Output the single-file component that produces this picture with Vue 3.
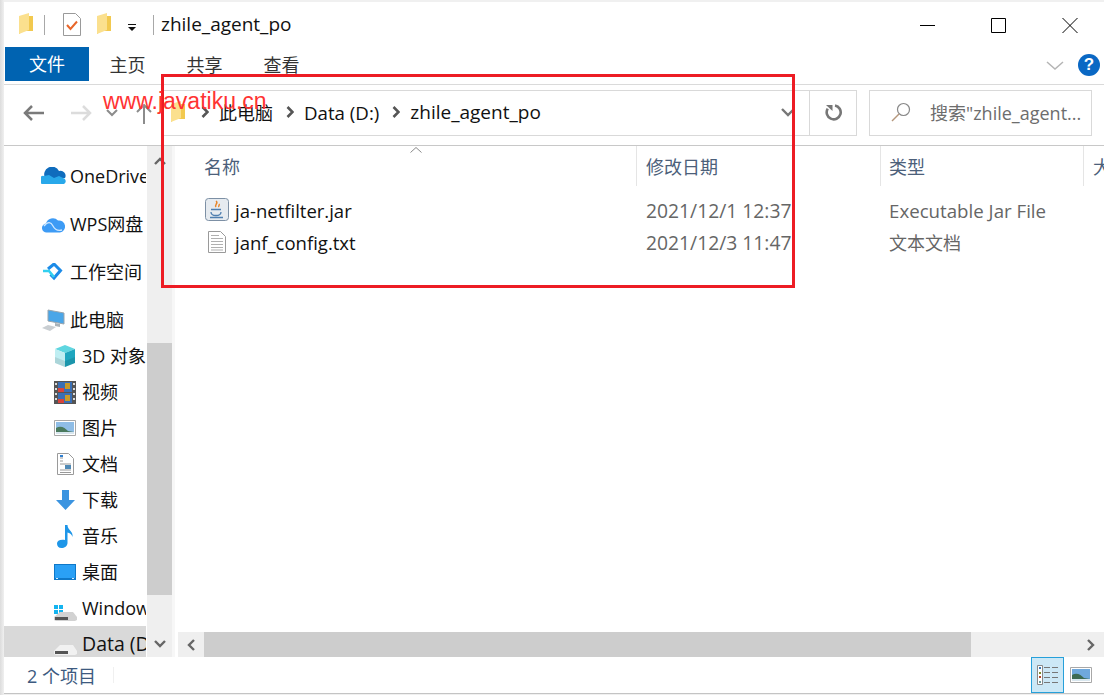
<script setup>
// left nav, order is the same as in explorer
const navItems = [
  { id: 'onedrive', label: 'OneDrive', head: true },
  { id: 'wps', label: 'WPS网盘', head: true },
  { id: 'work', label: '工作空间', head: true },
  { id: 'pc', label: '此电脑', head: true },
  { id: 'cube', label: '3D 对象' },
  { id: 'video', label: '视频' },
  { id: 'pic', label: '图片' },
  { id: 'doc', label: '文档' },
  { id: 'down', label: '下载' },
  { id: 'music', label: '音乐' },
  { id: 'desk', label: '桌面' },
  { id: 'win', label: 'Windows (C:)' },
  { id: 'data', label: 'Data (D:)', active: true },
]

const tabs = ['主页', '共享', '查看']
const crumbs = [
  { text: '此电脑', latin: false },
  { text: 'Data (D:)', latin: true },
  { text: 'zhile_agent_po', latin: true },
]
</script>

<template>
  <div class="desktop">
    <div class="window">
      <!-- title bar -->
      <div class="titlebar">
        <svg class="ic-folder" width="16" height="22" viewBox="0 0 16 22">
          <path d="M1 3h14v15H5l-4 3z" fill="#f2c94f" />
          <path d="M1 3l10-3v17l-10 4z" fill="#fbe08e" />
        </svg>
        <i class="vsep first"></i>
        <svg class="ic-check" width="18" height="23" viewBox="0 0 18 23">
          <path d="M.5.5h12l5 5v17H.5z" fill="#fff" stroke="#9a9a9a" />
          <path d="M4 12l3.500 4L14 8.500" fill="none" stroke="#e8662a" stroke-width="2" />
        </svg>
        <svg class="ic-folder two" width="16" height="22" viewBox="0 0 16 22">
          <path d="M1 3h14v15H5l-4 3z" fill="#f2c94f" />
          <path d="M1 3l10-3v17l-10 4z" fill="#fbe08e" />
        </svg>
        <svg class="ic-drop" width="10" height="8" viewBox="0 0 10 8">
          <path d="M1 0h8v1H1zM1 3h8L5 7z" fill="#111" />
        </svg>
        <i class="vsep second"></i>
        <span class="title">zhile_agent_po</span>
        <div class="winbtns">
          <svg width="16" height="16" viewBox="0 0 16 16"><path d="M0 8.500h15" stroke="#000" /></svg>
          <svg width="16" height="16" viewBox="0 0 16 16"><path d="M.5 1.500h14v14H.5z" fill="none" stroke="#000" /></svg>
          <svg width="16" height="16" viewBox="0 0 16 16"><path d="M.5 1l15 15M15.500 1l-15 15" stroke="#000" /></svg>
        </div>
      </div>

      <!-- ribbon tabs -->
      <div class="ribbon">
        <div class="tab-file">文件</div>
        <div v-for="t in tabs" :key="t" class="tab">{{ t }}</div>
        <svg class="rib-chev" width="18" height="10" viewBox="0 0 18 10">
          <path d="M1 1l8 7 8-7" fill="none" stroke="#b5b5b5" stroke-width="1.500" />
        </svg>
        <div class="help">?</div>
      </div>

      <!-- address row -->
      <div class="addrrow">
        <div class="navbtns">
          <svg width="22" height="16" viewBox="0 0 22 16"><path d="M9 1L2 8l7 7M2 8h19" fill="none" stroke="#7a7a7a" stroke-width="2.500" /></svg>
          <svg class="off" width="22" height="16" viewBox="0 0 22 16"><path d="M13 1l7 7-7 7M20 8H1" fill="none" stroke="#dcdcdc" stroke-width="2.500" /></svg>
          <svg class="small" width="12" height="8" viewBox="0 0 12 8"><path d="M1 1l5 5 5-5" fill="none" stroke="#8c8c8c" stroke-width="2" /></svg>
          <svg class="up" width="16" height="20" viewBox="0 0 16 20"><path d="M1 8l7-7 7 7M8 1v19" fill="none" stroke="#8c8c8c" stroke-width="2" /></svg>
        </div>
        <div class="addrbox">
          <svg class="addr-folder" width="16" height="22" viewBox="0 0 16 22">
            <path d="M1 3h14v15H5l-4 3z" fill="#f2c94f" />
            <path d="M1 3l10-3v17l-10 4z" fill="#fbe08e" />
          </svg>
          <template v-for="c in crumbs" :key="c.text">
            <svg class="crumb-chev" width="8" height="12" viewBox="0 0 8 12"><path d="M1.500 1l5 5-5 5" fill="none" stroke="#555" stroke-width="2.600" /></svg>
            <span class="crumb" :class="{ latin: c.latin }">{{ c.text }}</span>
          </template>
          <svg class="addr-drop" width="14" height="9" viewBox="0 0 14 9"><path d="M1 1l6 6 6-6" fill="none" stroke="#777" stroke-width="2.400" /></svg>
        </div>
        <div class="refresh">
          <svg width="18" height="18" viewBox="0 0 18 18">
            <path d="M5 2.500a7 7 0 1 0 8 0" transform="rotate(-24 9 9)" fill="none" stroke="#777" stroke-width="2.600" />
            <path d="M1 1h6.500v6z" fill="#777" />
          </svg>
        </div>
        <div class="search">
          <svg width="20" height="20" viewBox="0 0 20 20">
            <circle cx="12.500" cy="7.500" r="6" fill="none" stroke="#888" stroke-width="1.200" />
            <path d="M8 12l-7 7" stroke="#b5977d" stroke-width="1.500" />
          </svg>
          <span>搜索"zhile_agent...</span>
        </div>
      </div>

      <!-- main area -->
      <div class="main">
        <aside class="nav">
          <div
            v-for="item in navItems"
            :key="item.id"
            class="nav-row"
            :class="{ head: item.head, active: item.active }"
          >
            <span class="nav-ic" :class="item.id">
              <svg v-if="item.id === 'onedrive'" width="25" height="18" viewBox="0 0 25 18">
                <path d="M4 11a7.500 7.500 0 0 1 14-7 5 5 0 0 1 6 7z" fill="#0f6cbd" />
                <path d="M1 17a4 4 0 0 1 2-8l5-1 5 3 5-2 4 2a3.200 3.200 0 0 1 1 6z" fill="#28a8ea" />
              </svg>
              <svg v-else-if="item.id === 'wps'" width="23" height="18" viewBox="0 0 23 18">
                <path d="M5 17.500a4.500 4.500 0 0 1-1-9A7 7 0 0 1 16 5.500a6 6 0 0 1 2 12z" fill="#3d9bf5" />
                <path d="M2 11c4-5 7-4 9 0s5 5 9 4" fill="none" stroke="#cfe8ff" stroke-width="1.300" />
              </svg>
              <svg v-else-if="item.id === 'work'" width="23" height="18" viewBox="0 0 23 18">
                <path d="M6 6l6-5 6.500 6.500L12 15 8.500 11.500" fill="none" stroke="#1c8be8" stroke-width="3" />
                <path d="M1 8h6l5 6" fill="none" stroke="#33d0f0" stroke-width="2.600" />
              </svg>
              <svg v-else-if="item.id === 'pc'" width="23" height="22" viewBox="0 0 23 22">
                <path d="M6 1l16 3v11L6 12z" fill="#4aa6e8" stroke="#9aa5ad" />
                <path d="M13 14l5 1v3l-5-1z" fill="#a9b2b8" />
                <path d="M0 19l6-3 8 2-6 4z" fill="#c9ced2" />
              </svg>
              <svg v-else-if="item.id === 'cube'" width="22" height="22" viewBox="0 0 22 22">
                <path d="M11 0l10 4-10 4L1 4z" fill="#5fd6e0" />
                <path d="M1 4l10 4v14L1 18z" fill="#bfeef2" />
                <path d="M21 4L11 8v14l10-4z" fill="#1fa6bf" />
                <path d="M1 12l10 4 10-4v6l-10 4-10-4z" fill="#000" opacity=".1" />
              </svg>
              <svg v-else-if="item.id === 'video'" width="22" height="23" viewBox="0 0 22 23">
                <path d="M0 0h22v23H0z" fill="#555" />
                <path d="M4 1h14v10H4z" fill="#3a6fb5" />
                <path d="M4 12h14v10H4z" fill="#3a6fb5" />
                <path d="M4 7h6v4H4zM4 18h6v4H4z" fill="#d8443c" />
                <path d="M11 2h5v6h-5zM11 14h5v6h-5z" fill="#c89a2a" />
                <path d="M1 2h2v2H1zM1 7h2v2H1zM1 12h2v2H1zM1 17h2v2H1zM19 2h2v2h-2zM19 7h2v2h-2zM19 12h2v2h-2zM19 17h2v2h-2z" fill="#ddd" />
              </svg>
              <svg v-else-if="item.id === 'pic'" width="22" height="16" viewBox="0 0 22 16">
                <path d="M.5.500h21v15H.5z" fill="#fff" stroke="#a8a8a8" />
                <path d="M2 2h18v12H2z" fill="#8fbde6" />
                <path d="M2 8c5-3 9 0 12 3l6 1v2H2z" fill="#4a7a5e" />
                <path d="M2 12h18v2H2z" fill="#d8e6ee" />
              </svg>
              <svg v-else-if="item.id === 'doc'" width="17" height="22" viewBox="0 0 17 22">
                <path d="M.5.500h11l5 5v16H.5z" fill="#fff" stroke="#9a9a9a" />
                <path d="M3 5h3M3 8h3M3 11h11M3 17h11M3 19.500h11" stroke="#999" />
                <path d="M3 2h3v2H3z" fill="#2f7fd1" />
                <path d="M8 12h6v4H8z" fill="#4f89b5" />
              </svg>
              <svg v-else-if="item.id === 'down'" width="19" height="20" viewBox="0 0 19 20">
                <path d="M6 0h7v10h6l-9.500 10L0 10h6z" fill="#3b94e0" />
              </svg>
              <svg v-else-if="item.id === 'music'" width="17" height="23" viewBox="0 0 17 23">
                <path d="M8 0h2.500c0 5 6 6 5 12-1-3-3-4-5-4.500V18c0 3-3 5-6 5S0 21 0 18.500 3 14 8 15z" fill="#1e96e8" />
              </svg>
              <svg v-else-if="item.id === 'desk'" width="22" height="16" viewBox="0 0 22 16">
                <path d="M0 0h22v16H0z" fill="#0f78c8" />
                <path d="M1 1h20v13H1z" fill="#2aa0f5" />
                <path d="M2 14.500h2M18 14.500h2" stroke="#d8eeff" />
              </svg>
              <svg v-else-if="item.id === 'win'" width="23" height="17" viewBox="0 0 23 17">
                <path d="M0 0h4v4H0zM5 0h4v4H5zM0 5h4v4H0zM5 5h4v4H5z" fill="#14b4f0" />
                <path d="M0 12l6-5h13l4 5v3l-2 1H2l-2-1z" fill="#d2d2d2" />
                <path d="M1 12h13v3H1z" fill="#555" />
              </svg>
              <svg v-else width="23" height="11" viewBox="0 0 23 11">
                <path d="M0 6l6-6h13l4 6v3l-2 1H2L0 9z" fill="#f1f1f1" />
                <path d="M1 6h13v3H1z" fill="#555" />
              </svg>
            </span>
            <span class="nav-label">{{ item.label }}</span>
          </div>
        </aside>

        <div class="vbar">
          <svg class="v-up" width="12" height="8" viewBox="0 0 12 8"><path d="M1 7l5-5 5 5" fill="none" stroke="#666" stroke-width="2.400" /></svg>
          <div class="vthumb"></div>
          <svg class="v-down" width="12" height="8" viewBox="0 0 12 8"><path d="M1 1l5 5 5-5" fill="none" stroke="#666" stroke-width="2.400" /></svg>
        </div>

        <section class="files">
          <div class="cols">
            <div class="col c-name">名称</div>
            <div class="col c-date">修改日期</div>
            <div class="col c-type">类型</div>
            <div class="col c-size">大小</div>
            <svg class="sort" width="12" height="6" viewBox="0 0 12 6"><path d="M.5 5.500L6 .5l5.500 5" fill="none" stroke="#8a8a8a" /></svg>
          </div>
          <div class="rows">
            <div class="row">
              <div class="c-name file">
                <svg width="24" height="24" viewBox="0 0 24 24">
                  <rect x=".5" y=".5" width="23" height="22" rx="3" fill="#e6ebf0" stroke="#7d90a5" />
                  <path d="M11 3c3 2-2 4 0 6M14 6c1 1-1 2 0 3" fill="none" stroke="#e8862a" stroke-width="1.500" />
                  <path d="M6 11.500h10M6 14c0 3 2 3.500 5 3.500s5-.5 5-3.500M5 19.500h13" fill="none" stroke="#4f7fb0" stroke-width="1.300" />
                </svg>
                <span class="nm">ja-netfilter.jar</span>
              </div>
              <div class="c-date meta date">2021/12/1 12:37</div>
              <div class="c-type meta latin">Executable Jar File</div>
            </div>
            <div class="row">
              <div class="c-name file">
                <svg class="txt" width="18" height="22" viewBox="0 0 18 22">
                  <path d="M.5.500h12l5 5v16H.5z" fill="#fff" stroke="#9a9a9a" />
                  <path d="M3 4.500h8M3 7.500h12M3 10.500h12M3 13.500h12M3 16.500h12M3 19h12" stroke="#b0b0b0" />
                </svg>
                <span class="nm">janf_config.txt</span>
              </div>
              <div class="c-date meta date">2021/12/3 11:47</div>
              <div class="c-type meta">文本文档</div>
            </div>
          </div>
          <div class="hbar">
            <svg width="8" height="12" viewBox="0 0 8 12"><path d="M7 1L2 6l5 5" fill="none" stroke="#666" stroke-width="2.400" /></svg>
            <div class="hthumb"></div>
            <svg width="8" height="12" viewBox="0 0 8 12"><path d="M1 1l5 5-5 5" fill="none" stroke="#666" stroke-width="2.400" /></svg>
          </div>
        </section>
      </div>

      <!-- status bar -->
      <div class="status">
        <span class="count">2 个项目</span>
        <i class="status-sep"></i>
        <div class="view-btn on">
          <svg width="22" height="20" viewBox="0 0 22 20">
            <path d="M.5.500h5v19h-5z" fill="#fff" stroke="#888" />
            <path d="M2 2h2v2H2z" fill="#3a78b5" />
            <path d="M2 7h2v2H2z" fill="#7d8a2a" />
            <path d="M2 11h2v2H2z" fill="#b5462a" />
            <path d="M2 16h2v2H2z" fill="#6a9a9a" />
            <path d="M7 2.500h6M15 2.500h6M7 7.500h6M15 7.500h6M7 12.500h6M15 12.500h6M7 17.500h6M15 17.500h6" stroke="#777" />
          </svg>
        </div>
        <div class="view-btn">
          <svg width="22" height="16" viewBox="0 0 22 16">
            <path d="M.5.500h21v15H.5z" fill="#fff" stroke="#a8a8a8" />
            <path d="M2 2h18v12H2z" fill="#6fa8dc" />
            <path d="M2 8c5-3 9 0 12 3l6 1v2H2z" fill="#3d6a52" />
            <path d="M2 12h18v2H2z" fill="#d8e6ee" />
          </svg>
        </div>
      </div>
    </div>

    <!-- annotation on top of the screenshot -->
    <div class="redbox"></div>
    <div class="watermark">www.javatiku.cn</div>
  </div>
</template>

<style>
html, body {
  margin: 0;
  overflow: hidden;
}
</style>

<style scoped>
.desktop {
  position: relative;
  width: 1104px;
  height: 695px;
  overflow: hidden;
  box-sizing: border-box;
  padding: 2px 0 1px 4px;
  background: linear-gradient(90deg, #dcdcdc, #f0f0f0 4px);
  font-family: "Open Sans", "Noto Sans CJK SC", sans-serif;
  font-size: 18px;
  color: #111;
}

.window {
  height: 692px;
  background: #fff;
  display: flex;
  flex-direction: column;
  border-bottom: 1px solid #c4c4c4;
  box-sizing: border-box;
}

svg {
  display: block;
  flex: none;
}

.titlebar {
  height: 45px;
  flex: none;
  display: flex;
  align-items: center;
  padding-left: 14px;
}

.ic-folder {
  margin-top: -2px;
}

.vsep {
  width: 1px;
  height: 20px;
  background: #a8a8a8;
}

.vsep.first {
  margin: 0 18px 0 10px;
}

.ic-check {
  margin-right: 15px;
}

.ic-drop {
  margin: 6px 0 0 15px;
}

.vsep.second {
  margin: 0 7px 0 16px;
}

.title {
  font-size: 19px;
  line-height: 24px;
  margin-top: -1px;
}

.winbtns {
  margin-left: auto;
  display: flex;
  gap: 55px;
  padding-right: 26px;
}

.ribbon {
  height: 38px;
  flex: none;
  display: flex;
  align-items: flex-start;
  padding-left: 1px;
  box-sizing: border-box;
  border-bottom: 1px solid #dadada;
}

.tab-file {
  width: 84px;
  height: 34px;
  background: #0063b1;
  color: #fff;
  text-align: center;
  line-height: 34px;
}

.tab {
  width: 77px;
  height: 34px;
  line-height: 36px;
  text-align: center;
  color: #333;
}

.rib-chev {
  margin: 14px 0 0 auto;
}

.help {
  width: 22px;
  height: 22px;
  border-radius: 50%;
  margin: 7px 4px 0 14px;
  background: #0a68c4;
  color: #fff;
  font: bold 17px/22px "Liberation Sans", sans-serif;
  text-align: center;
}

.addrrow {
  height: 61px;
  flex: none;
  display: flex;
  align-items: flex-start;
  padding-top: 5px;
  border-bottom: 1px solid #c8c8c8;
  box-sizing: border-box;
}

.navbtns {
  width: 159px;
  height: 46px;
  flex: none;
  display: flex;
  align-items: center;
  padding-left: 19px;
  box-sizing: border-box;
}

.navbtns .off {
  margin-left: 25px;
}

.navbtns .small {
  margin-left: 14px;
}

.navbtns .up {
  margin-left: 18px;
  margin-top: 2px;
}

.addrbox {
  width: 647px;
  height: 46px;
  flex: none;
  box-sizing: border-box;
  border: 1px solid #d9d9d9;
  border-left: 0;
  display: flex;
  align-items: center;
  padding-left: 7px;
  padding-bottom: 2px;
}

.addr-folder {
  margin-right: 15px;
}

.crumb-chev {
  margin: 0 10px 0 0;
}

.crumb {
  margin-right: 13px;
  color: #111;
}

.latin {
  font-size: 18.7px;
}

.crumb.latin:last-of-type {
  font-size: 19px;
}

.addr-drop {
  margin-left: auto;
  margin-right: 14px;
}

.refresh {
  width: 47px;
  height: 46px;
  flex: none;
  box-sizing: border-box;
  border: 1px solid #d9d9d9;
  border-left: 0;
  display: flex;
  align-items: center;
  justify-content: center;
  padding-left: 2px;
}

.search {
  width: 223px;
  height: 46px;
  flex: none;
  margin-left: 12px;
  box-sizing: border-box;
  border: 1px solid #d9d9d9;
  display: flex;
  align-items: center;
  padding-left: 21px;
  padding-bottom: 2px;
  gap: 19px;
  color: #6d6d6d;
  white-space: nowrap;
  overflow: hidden;
}

.main {
  flex: 1;
  min-height: 0;
  display: flex;
}

.nav {
  width: 142px;
  margin-right: 1px;
  flex: none;
  overflow: hidden;
}

.nav-row {
  height: 36px;
  display: flex;
  align-items: center;
  padding-left: 50px;
  white-space: nowrap;
}

.nav-row.head {
  margin-top: 12px;
  padding-left: 37px;
}

.nav-row.active {
  background: #d9d9d9;
}

.nav-row.active .nav-label {
  font-size: 19.5px;
}

.nav-ic {
  width: 22px;
  margin-right: 6px;
  flex: none;
  display: flex;
  align-items: center;
  justify-content: center;
}

.nav-row.head .nav-ic {
  width: 25px;
  margin-right: 4px;
}

.nav-ic.win {
  margin-top: 10px;
}

.nav-ic.data {
  margin-top: 12px;
}

.nav-label {
  line-height: 24px;
}

.vbar {
  width: 25px;
  flex: none;
  background: #efefef;
  display: flex;
  flex-direction: column;
  align-items: center;
  border-right: 3px solid #f7f7f7;
}

.v-up {
  margin-top: 11px;
}

.vthumb {
  width: 25px;
  height: 252px;
  background: #cdcdcd;
  margin-top: 178px;
}

.v-down {
  margin-top: 45px;
}

.files {
  flex: 1;
  min-width: 0;
  display: flex;
  flex-direction: column;
  padding-left: 3px;
}

.cols {
  position: relative;
  height: 40px;
  flex: none;
  display: flex;
  color: #4c607a;
}

.sort {
  position: absolute;
  left: 232px;
  top: 1px;
}

.col {
  box-sizing: border-box;
  line-height: 42px;
  white-space: nowrap;
  overflow: hidden;
}

.c-name {
  width: 458px;
  flex: none;
  padding-left: 26px;
  box-sizing: border-box;
}

.c-date {
  width: 244px;
  flex: none;
  padding-left: 10px;
  box-sizing: border-box;
  white-space: nowrap;
}

.c-type {
  width: 203px;
  flex: none;
  padding-left: 9px;
  box-sizing: border-box;
  white-space: nowrap;
}

.c-size {
  flex: 1;
  padding-left: 9px;
  min-width: 0;
}

.col.c-date,
.col.c-type,
.col.c-size {
  border-left: 1px solid #e5e5e5;
}

.col.c-date {
  padding-left: 9px;
}

.col.c-type {
  padding-left: 8px;
}

.rows {
  flex: 1;
  padding-top: 8px;
}

.row {
  height: 32px;
  display: flex;
  align-items: center;
}

.file {
  display: flex;
  align-items: center;
  gap: 6px;
  padding-left: 27px;
}

.file .nm {
  font-size: 18.5px;
}

.file .txt {
  margin: 0 3px 0 3px;
}

.meta {
  color: #666;
}

.date {
  font-size: 19.3px;
}

.hbar {
  height: 25px;
  flex: none;
  background: #efefef;
  display: flex;
  align-items: center;
  padding: 0 9px;
  position: relative;
  justify-content: space-between;
}

.hthumb {
  position: absolute;
  left: 26px;
  right: 133px;
  top: 0;
  bottom: 0;
  background: #cdcdcd;
}

.status {
  height: 36px;
  flex: none;
  display: flex;
  align-items: center;
  padding-left: 23px;
  color: #3d5a80;
}

.count {
  width: 86px;
}

.status-sep {
  width: 1px;
  height: 16px;
  background: #f0f0f0;
  margin-right: auto;
}

.view-btn {
  width: 33px;
  height: 36px;
  display: flex;
  align-items: center;
  justify-content: center;
  box-sizing: border-box;
}

.view-btn.on {
  background: #cce8f6;
  border: 1px solid #26a0da;
}

.view-btn:last-child {
  margin-right: 7px;
}

.redbox {
  position: absolute;
  left: 161px;
  top: 74px;
  width: 634px;
  height: 214px;
  box-sizing: border-box;
  border: 3px solid #ed1c24;
}

.watermark {
  position: absolute;
  left: 103px;
  top: 87px;
  font: 23px/28px "Liberation Sans", sans-serif;
  color: #f33;
}
</style>
